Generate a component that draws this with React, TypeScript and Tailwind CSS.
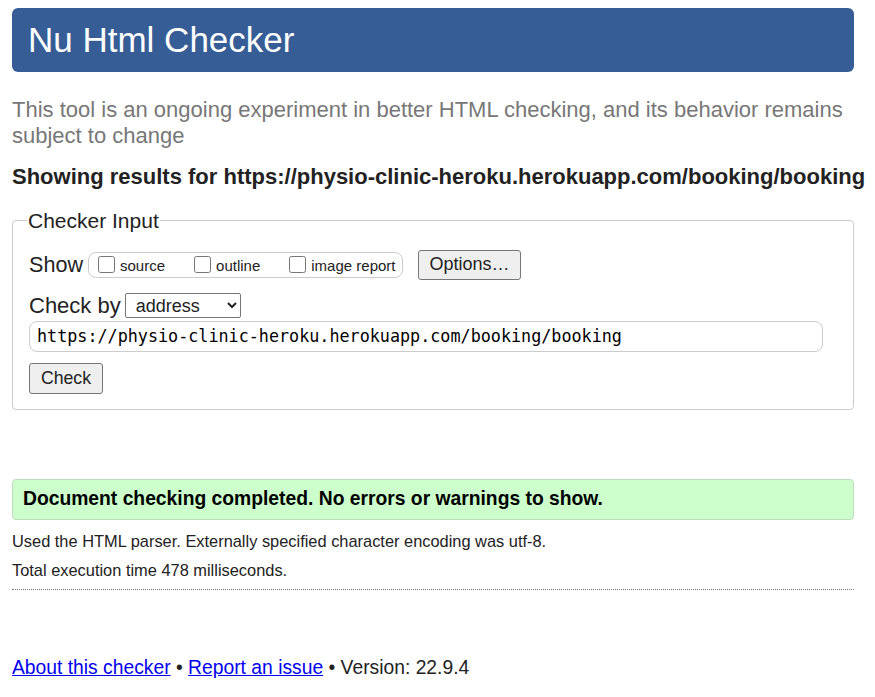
import React from "react";

const App = () => {
  return (
    <div className="min-h-[697px] bg-white pl-3 pr-[21px] pt-2 font-['Liberation_Sans',Arial,sans-serif] text-[#222]">
      <div className="flex h-16 items-center rounded-md bg-[#365d95] px-4">
        <h1 className="text-[35px] text-white">Nu Html Checker</h1>
      </div>

      <p className="mt-[25px] text-[22px] leading-[26px] text-[#777]">
        This tool is an ongoing experiment in better HTML checking, and its behavior remains subject to change
      </p>

      <h2 className="mt-[15px] whitespace-nowrap text-[22px] font-bold leading-[26px] text-[#222]">
        Showing results for https://physio-clinic-heroku.herokuapp.com/booking/booking
      </h2>

      <fieldset className="mt-[15px] rounded border border-[#ccc] px-4 pb-[15px] pt-[12px]">
        <legend className="-ml-[2px] px-[1px] text-[21px] text-[#222]">Checker Input</legend>

        <div className="flex items-center gap-[5px]">
          <span className="text-[21.6px]">Show</span>
          <div className="flex h-[26px] w-[315px] items-center rounded-lg border border-[#ccc] pl-[9px] text-[15px]">
            <label className="flex items-center">
              <input type="checkbox" className="mr-[5px] h-[17px] w-[17px]" />
              <span className="pt-[3px]">source</span>
            </label>
            <label className="ml-[29px] flex items-center">
              <input type="checkbox" className="mr-[5px] h-[17px] w-[17px]" />
              <span className="pt-[3px]">outline</span>
            </label>
            <label className="ml-[29px] flex items-center">
              <input type="checkbox" className="mr-[5px] h-[17px] w-[17px]" />
              <span className="pt-[3px]">image report</span>
            </label>
          </div>
          <button className="ml-[10px] h-[30px] w-[103px] rounded-[3px] border border-[#767676] bg-[#efefef] text-[18px]">
            Options…
          </button>
        </div>

        <div className="mt-[12px] flex items-center gap-[4px]">
          <span className="text-[22px] leading-[26px]">Check by</span>
          <select className="h-[25px] w-[116px] rounded-[2px] border border-[#767676] bg-white pl-[6px] text-[18px]">
            <option>address</option>
          </select>
        </div>

        <input
          type="text"
          readOnly
          value="https://physio-clinic-heroku.herokuapp.com/booking/booking"
          className="mt-[2px] h-[31px] w-[794px] rounded-lg border border-[#ccc] px-[7px] font-['DejaVu_Sans_Mono',monospace] text-[16.75px] text-black"
        />

        <button className="mt-[11px] block h-[31px] w-[74px] rounded-[3px] border border-[#767676] bg-[#efefef] text-[17.7px]">
          Check
        </button>
      </fieldset>

      <div className="mt-[69px] flex h-[41px] items-center rounded border border-[#bdb] bg-[#ccffcc] px-[10px]">
        <span className="text-[19.3px] font-bold text-black">
          Document checking completed. No errors or warnings to show.
        </span>
      </div>

      <p className="mt-[12px] text-[16.4px] leading-[18px] text-[#222]">
        Used the HTML parser. Externally specified character encoding was utf-8.
      </p>
      <p className="mt-[11px] text-[16.4px] leading-[18px] text-[#222]">Total execution time 478 milliseconds.</p>

      <hr className="mt-[10px] border-0 border-t border-dotted border-[#777]" />

      <p className="mt-[64px] text-[19.3px] text-[#222]">
        <a href="#" className="text-[#0000ee] underline">
          About this checker
        </a>{" "}
        •{" "}
        <a href="#" className="text-[#0000ee] underline">
          Report an issue
        </a>{" "}
        • Version: 22.9.4
      </p>
    </div>
  );
};

export default App;
